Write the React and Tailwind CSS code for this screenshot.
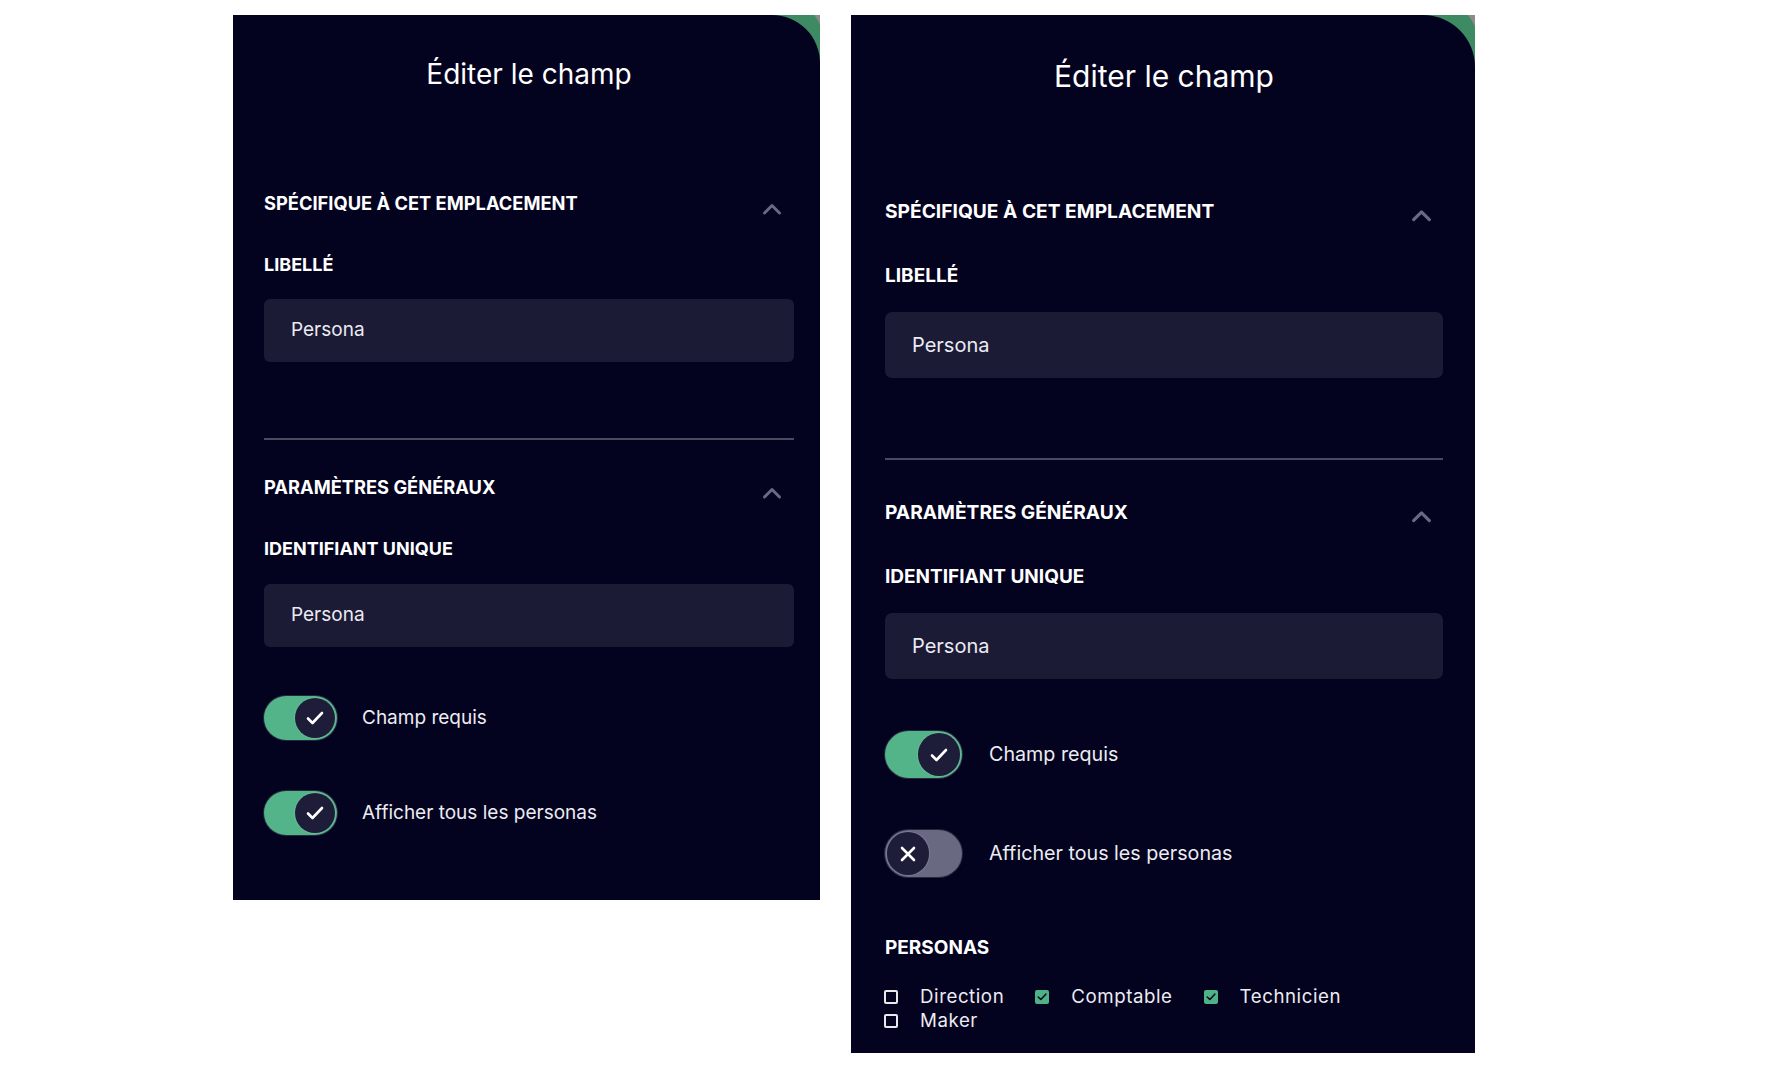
import React from 'react';

const font = { fontFamily: 'Inter, "Noto Sans", sans-serif' };

function Chevron({ large }) {
  return (
    <svg
      width={large ? 21 : 20}
      height={large ? 15 : 14}
      viewBox="0 0 20 14"
      className={large ? 'mt-[10px] mr-[11px] shrink-0' : 'mt-[11px] mr-[12px] shrink-0'}
    >
      <polyline points="2.5,11 10,3.5 17.5,11" fill="none" stroke="#6a6982" strokeWidth="3" strokeLinecap="round" strokeLinejoin="round" />
    </svg>
  );
}

function Toggle({ on, large }) {
  const track = large ? 'w-[77px] h-[47px] p-[2px]' : 'w-[73px] h-[44px] p-[2px]';
  const knob = large ? 'w-[42px] h-[43px]' : 'w-[40px] h-[40px]';
  return (
    <div
      className={`${track} rounded-full flex items-center ring-1 ring-white/15 ${on ? 'bg-[#53b389] justify-end' : 'bg-[#6a6982] justify-start'}`}
    >
      <div className={`${knob} rounded-full bg-[#1e1d39] ring-1 ring-white/10 flex items-center justify-center`}>
        {on ? (
          <svg width="18" height="14" viewBox="0 0 18 14">
            <polyline points="2,7.5 6.5,12 16,2" fill="none" stroke="white" strokeWidth="2.6" strokeLinecap="round" strokeLinejoin="round" />
          </svg>
        ) : (
          <svg width="16" height="16" viewBox="0 0 16 16">
            <path d="M2 2 L14 14 M14 2 L2 14" fill="none" stroke="white" strokeWidth="2.6" strokeLinecap="round" />
          </svg>
        )}
      </div>
    </div>
  );
}

function Checkbox({ checked, label }) {
  return (
    <div className="flex items-center h-[24px]">
      {checked ? (
        <div className="w-[14px] h-[14px] rounded-[2px] bg-[#4fb286] flex items-center justify-center">
          <svg width="10" height="8" viewBox="0 0 10 8">
            <polyline points="1.2,4 3.8,6.5 8.8,1.2" fill="none" stroke="#0b0b24" strokeWidth="1.6" strokeLinecap="round" strokeLinejoin="round" />
          </svg>
        </div>
      ) : (
        <div className="w-[14px] h-[14px] rounded-[2px] border-2 border-[#e8e8ee]"></div>
      )}
      <span className="ml-[22px] text-[18.7px] leading-[24px] tracking-[0.03em] text-[#ececf2]">{label}</span>
    </div>
  );
}

function Panel({ large, showAll }) {
  const header = large ? 'text-[19.2px] leading-[26px]' : 'text-[18.3px] leading-[24px]';
  const label = large ? 'text-[19px] leading-[24px]' : 'text-[18px] leading-[22px]';
  const input = large
    ? 'h-[66px] pl-[27px] text-[20px] rounded-[7px]'
    : 'h-[63px] pl-[27px] text-[19px] rounded-[6px]';
  const body = large ? 'text-[19.7px] ml-[27px]' : 'text-[19px] ml-[25px]';

  return (
    <div className="relative shrink-0">
      {/* coin décoratif derrière le panneau */}
      {large ? (
        <div className="absolute top-0 right-0 w-[52px] h-[56px] bg-[#8b8b8b] overflow-hidden">
          <div className="absolute left-[-66px] top-[-24px] w-[124px] h-[124px] rounded-full bg-[#3e8a62]"></div>
        </div>
      ) : (
        <div className="absolute top-0 right-0 w-[50px] h-[52px] bg-[#8b8b8b] overflow-hidden">
          <div className="absolute left-[-60px] top-[-23px] w-[116px] h-[116px] rounded-full bg-[#3e8a62]"></div>
        </div>
      )}

      <div
        className={`relative bg-[#03021f] text-white flex flex-col ${
          large
            ? 'w-[624px] pt-[43px] pl-[34px] pr-[32px] pb-[20px] rounded-tr-[52px]'
            : 'w-[587px] pt-[42px] pl-[31px] pr-[26px] pb-[65px] rounded-tr-[48px]'
        }`}
      >
        <h1 className={`text-center font-normal ${large ? 'text-[30px] leading-[36px]' : 'text-[28px] leading-[34px]'}`}>
          Éditer le champ
        </h1>

        {/* Section 1 */}
        <div className={`flex justify-between items-start ${large ? 'mt-[104px]' : 'mt-[100px]'}`}>
          <h2 className={`${header} font-bold`}>SPÉCIFIQUE À CET EMPLACEMENT</h2>
          <Chevron large={large} />
        </div>
        <div className={`${label} font-bold ${large ? 'mt-[40px]' : 'mt-[38px]'}`}>LIBELLÉ</div>
        <div className={`${input} bg-[#1c1b36] flex items-center text-[#ebebf2] ${large ? 'mt-[24px]' : 'mt-[23px]'}`}>
          Persona
        </div>

        <div className={`h-[2px] bg-[#4a4a5f] ${large ? 'mt-[80px]' : 'mt-[76px]'}`}></div>

        {/* Section 2 */}
        <div className={`flex justify-between items-start ${large ? 'mt-[39px]' : 'mt-[35px]'}`}>
          <h2 className={`${header} font-bold`}>PARAMÈTRES GÉNÉRAUX</h2>
          <Chevron large={large} />
        </div>
        <div className={`${label} font-bold ${large ? 'mt-[40px]' : 'mt-[38px]'}`}>IDENTIFIANT UNIQUE</div>
        <div className={`${input} bg-[#1c1b36] flex items-center text-[#ebebf2] mt-[24px]`}>
          Persona
        </div>

        <div className={`flex items-center ${large ? 'mt-[52px]' : 'mt-[49px]'}`}>
          <Toggle on large={large} />
          <span className={`${body} text-[#ececf2]`}>Champ requis</span>
        </div>
        <div className={`flex items-center ${large ? 'mt-[52px]' : 'mt-[51px]'}`}>
          <Toggle on={showAll} large={large} />
          <span className={`${body} text-[#ececf2]`}>Afficher tous les personas</span>
        </div>

        {!showAll && (
          <>
            <div className="mt-[59px] text-[19px] leading-[24px] font-bold">PERSONAS</div>
            <div className="mt-[25px] flex flex-wrap gap-x-[31px] ml-[-1px]">
              <Checkbox label="Direction" />
              <Checkbox checked label="Comptable" />
              <Checkbox checked label="Technicien" />
              <Checkbox label="Maker" />
            </div>
          </>
        )}
      </div>
    </div>
  );
}

export default function App() {
  return (
    <div className="min-h-screen bg-white" style={font}>
      <div className="flex items-start gap-[31px] pl-[233px] pt-[15px]">
        <Panel showAll />
        <Panel large showAll={false} />
      </div>
    </div>
  );
}
